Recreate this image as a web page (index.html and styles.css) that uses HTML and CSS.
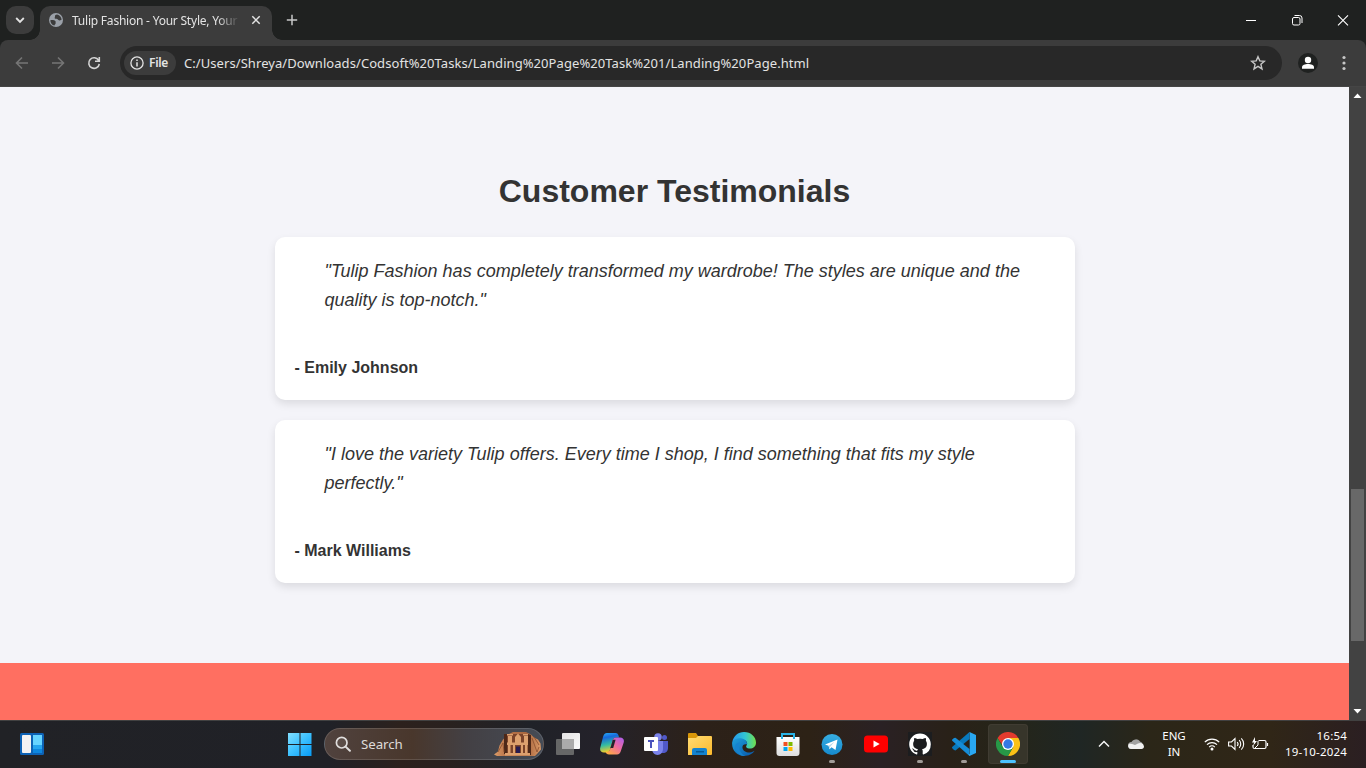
FILE: index.html
```html
<!DOCTYPE html>
<html lang="en">
<head>
<meta charset="utf-8">
<title>Tulip Fashion - Your Style, Your Way</title>
<link rel="stylesheet" href="styles.css">
</head>
<body>
<div class="screen">
  <header class="tabstrip">
    <button class="tab-search"><svg width="28" height="28" viewBox="0 0 28 28"><path d="M10.200 12l3.800 3.900 3.800-3.900" fill="none" stroke="#e3e3e3" stroke-width="1.800"/></svg></button>
    <div class="tab">
      <svg class="tab-icon" width="14" height="14" viewBox="0 0 14 14"><circle cx="7" cy="7" r="7" fill="#9aa0a8"/><path d="M1.300 7.200c2.100-.3 4-.2 5 .8.9 1 .1 1.400.3 2.400.2.800-1 .7-1.100 2.100C3 12 1.300 9.800 1.300 7.200zM8.200 1.400C6.300 1.600 5.700 2.500 6 3.500c.2.900-.8 1.300-.1 2 .8.800 2.300 0 3 1.100.5 1 1.900 1 3.700.2C12.500 4 10.800 2.200 8.200 1.400z" fill="#3c3c3c"/></svg>
      <span class="tab-title">Tulip Fashion - Your Style, Your W</span>
      <svg class="tab-close" width="10" height="10" viewBox="0 0 10 10"><path d="M1.300 1.300l7.400 7.400M8.700 1.300L1.300 8.700" stroke="#e3e3e3" stroke-width="1.500"/></svg>
    </div>
    <svg class="new-tab" width="12" height="12" viewBox="0 0 12 12"><path d="M6 .8v10.400M.8 6h10.400" stroke="#c7c7c7" stroke-width="1.500"/></svg>
    <div class="window-buttons">
      <svg width="46" height="40" viewBox="0 0 46 40"><path d="M18 20.500h10" stroke="#fff"/></svg>
      <svg width="46" height="40" viewBox="0 0 46 40"><g fill="none" stroke="#fff"><rect x="18.500" y="17.500" width="7.500" height="7.500" rx="1.500"/><path d="M20.500 15.500h5a2.500 2.500 0 0 1 2.500 2.500v5"/></g></svg>
      <svg width="46" height="40" viewBox="0 0 46 40"><path d="M18 15.300l10 10M28 15.300l-10 10" stroke="#fff" stroke-width="1.100"/></svg>
    </div>
  </header>

  <nav class="toolbar">
    <svg class="nav" width="16" height="16" viewBox="0 0 16 16"><path d="M14 8H2.700M8 2.500L2.500 8 8 13.500" class="line dim"/></svg>
    <svg class="nav" width="16" height="16" viewBox="0 0 16 16"><path d="M2 8h11.300M8 2.500L13.500 8 8 13.500" class="line dim"/></svg>
    <svg class="nav" width="16" height="16" viewBox="0 0 16 16"><path d="M12.600 5.300A5.300 5.300 0 1 0 13.300 9M13.300 2v4.300H9" class="line"/></svg>
    <div class="omnibox">
      <div class="chip">
        <svg width="14" height="14" viewBox="0 0 14 14"><circle cx="7" cy="7" r="6.100" fill="none" stroke="#e3e3e3" stroke-width="1.300"/><path d="M7 6.200v4.200M7 3.500v1.500" stroke="#e3e3e3" stroke-width="1.500"/></svg>
        <span>File</span>
      </div>
      <span class="url">C:/Users/Shreya/Downloads/Codsoft%20Tasks/Landing%20Page%20Task%201/Landing%20Page.html</span>
      <svg class="star" width="16" height="16" viewBox="0 0 16 16"><path d="M8 1.700l1.800 4.200 4.600.4-3.500 3 1.100 4.600L8 11.400l-4 2.500 1.100-4.600-3.500-3 4.600-.4z" fill="none" stroke="#c7c7c7" stroke-width="1.400"/></svg>
    </div>
    <svg class="profile" width="20" height="20" viewBox="0 0 20 20"><circle cx="10" cy="10" r="10" fill="#1f2120"/><circle cx="10" cy="7" r="3.200" fill="#fff"/><path d="M4 15.800v-1.600c0-2 3-3.200 6-3.200s6 1.200 6 3.200v1.600z" fill="#fff"/></svg>
    <svg class="menu" width="4" height="16" viewBox="0 0 4 16"><g fill="#c7c7c7"><circle cx="2" cy="2.500" r="1.600"/><circle cx="2" cy="8" r="1.600"/><circle cx="2" cy="13.500" r="1.600"/></g></svg>
  </nav>

  <div class="viewport">
    <main class="page">
      <section class="testimonials">
        <h2>Customer Testimonials</h2>
        <article class="card">
          <blockquote>"Tulip Fashion has completely transformed my wardrobe! The styles are unique and the<br>quality is top-notch."</blockquote>
          <p class="author">- Emily Johnson</p>
        </article>
        <article class="card">
          <blockquote>"I love the variety Tulip offers. Every time I shop, I find something that fits my style<br>perfectly."</blockquote>
          <p class="author">- Mark Williams</p>
        </article>
      </section>
      <section class="banner"></section>
    </main>
    <div class="scrollbar">
      <svg width="17" height="17" viewBox="0 0 17 17"><path d="M4.500 11L8.500 6.500 12.500 11z" fill="#fff"/></svg>
      <div class="thumb"></div>
      <svg width="17" height="17" viewBox="0 0 17 17"><path d="M4.500 6L8.500 10.500 12.500 6z" fill="#fff"/></svg>
    </div>
  </div>

  <footer class="taskbar">
    <svg class="widgets" width="24" height="22" viewBox="0 0 24 22"><rect width="24" height="22" rx="1.500" fill="#0d62b5"/><rect x="2" y="2" width="9" height="18" rx="1" fill="#f3f3f3"/><path d="M13 2h9v10h-9z" fill="#66d4ff"/><path d="M13 12h9v4h-9z" fill="#24a5ef"/><path d="M13 16h9v4h-9z" fill="#0d87df"/></svg>
    <div class="apps">
      <div class="app start"><svg width="24" height="24" viewBox="0 0 24 24"><defs><linearGradient id="win" x1="0" y1="0" x2="1" y2="1"><stop stop-color="#82dfff"/><stop offset=".5" stop-color="#3bc0ff"/><stop offset="1" stop-color="#079bf5"/></linearGradient></defs><path d="M0 1h11.500v11H0zM12.500 1H23.500v11H12.500zM0 13h11.500v11H0zM12.500 13H23.500v11H12.500z" fill="url(#win)"/></svg></div>
      <div class="search">
        <svg width="16" height="16" viewBox="0 0 16 16"><circle cx="6.700" cy="6.700" r="5.300" fill="#ffffff12" stroke="#e0dedd" stroke-width="1.700"/><path d="M10.600 10.600l4.300 4.200" stroke="#e0dedd" stroke-width="2" stroke-linecap="round"/></svg>
        <span>Search</span>
        <svg class="petra" width="48" height="26" viewBox="0 0 48 26"><defs><linearGradient id="rock"><stop stop-color="#dd9c67"/><stop offset=".25" stop-color="#b9744a"/><stop offset=".7" stop-color="#a9663e"/><stop offset="1" stop-color="#d99866"/></linearGradient></defs><path d="M0 23.500l4-3 1.500-6 3.500-6 5-5 5-2.500h13l5 2.500 3 3 4 2 2.500 4 .5 6-4 4.500-2 2H3z" fill="url(#rock)"/><path d="M10 3h3v20h-3zM34 3l3 1v20h-3z" fill="#4e2818"/><path d="M13 3h21v21H13z" fill="#7b432a"/><path d="M13 11.500h21V14H13zM11 22h25v2.500H11zM14 14h2.500v9H14zM19 14h2v9h-2zM27 14h2v9h-2zM31 14h2.500v9H31zM14 5h4v7h-4zM30 5h4v7h-4zM21 6l3-3.500L27 6v6h-6zM13 3h6v1.500h-6zM29 3h5v1.500h-5z" fill="#dda06e"/><path d="M22 15.500h4V22h-4z" fill="#271b50"/><path d="M38 7l5 14 2-5M40 6l5 8M4 21l5-9 1 9" fill="none" stroke="#8a4e2d" stroke-width=".8"/></svg>
      </div>
      <div class="app"><svg width="24" height="24" viewBox="0 0 24 24"><defs><linearGradient id="tvw" x2="1" y2="1"><stop stop-color="#e4e4e4"/><stop offset="1" stop-color="#fafafa"/></linearGradient></defs><rect x="6" y="1" width="18" height="16" rx="1" fill="url(#tvw)"/><rect y="7" width="18" height="16" rx="1" fill="#666767"/><path d="M6 7h12v10H6z" fill="#ababab"/></svg></div>
      <div class="app"><svg width="24" height="24" viewBox="0 0 24 24"><defs><linearGradient id="cp1" x2=".2" y2="1"><stop stop-color="#27b3fa"/><stop offset=".28" stop-color="#1768dc"/><stop offset=".65" stop-color="#36bda0"/><stop offset="1" stop-color="#efce2b"/></linearGradient><linearGradient id="cp2" x1="1" x2=".2" y2="1"><stop stop-color="#a85cf0"/><stop offset=".5" stop-color="#ee6aa1"/><stop offset="1" stop-color="#ffab43"/></linearGradient></defs><path d="M7 1h8.500c1.800 0 2.700 1 3.200 3L19 5.500h-3c-2 0-2.800 1-3.300 3L10.500 16c-.8 3-1.500 4.500-4 4.500H4C1 20.500-.5 18.500.3 15.500L3 5c.7-2.500 2-4 4-4z" fill="url(#cp1)"/><path d="M17 22.500H9c-2 0-2.900-1-3.400-2.500 3.200 0 4.200-1 4.900-4l2.200-7.500c.5-2 1.300-3 3.300-3h4c3 0 4.500 2 3.700 5L21 18.500c-.7 2.500-2 4-4 4z" fill="url(#cp2)"/><path d="M12.900 7.800h2.700L13.200 16h-2.800z" fill="#26222a"/></svg></div>
      <div class="app"><svg width="24" height="24" viewBox="0 0 24 24"><circle cx="14" cy="5" r="3.800" fill="#7b83eb"/><circle cx="20.500" cy="5.500" r="2.500" fill="#5059c9"/><path d="M17 9h7v7c0 3-2 5-5 5h-2z" fill="#5059c9"/><path d="M8 9h11v8c0 3-2.500 6-5.500 6S8 20 8 17z" fill="#7b83eb"/><rect y="5" width="14" height="14" rx="1" fill="#fff"/><path d="M4 8h6v2H8v6H6v-6H4z" fill="#4b53bc"/></svg></div>
      <div class="app"><svg width="24" height="24" viewBox="0 0 24 24"><defs><linearGradient id="fold" x2="1" y2="1"><stop stop-color="#ffdc74"/><stop offset="1" stop-color="#fcb92c"/></linearGradient></defs><path d="M0 2q0-1 1-1h7l2 3v3H0z" fill="#d99709"/><path d="M0 6h8l2-2h13q1 0 1 1v17q0 1-1 1H0z" fill="url(#fold)"/><path d="M4 23v-5q0-2 2-2h11q2 0 2 2v5z" fill="#1483cf"/><path d="M8 19h8v1.500H8z" fill="#075994"/></svg></div>
      <div class="app"><svg width="24" height="24" viewBox="0 0 24 24"><defs><linearGradient id="ed1" x2="1"><stop stop-color="#2598ef"/><stop offset=".55" stop-color="#32c6d1"/><stop offset="1" stop-color="#71e14c"/></linearGradient><linearGradient id="ed2" x2="1" y2="1"><stop stop-color="#1fa0db"/><stop offset="1" stop-color="#0756aa"/></linearGradient></defs><path d="M.3 10C1.500 4 6 0 12 0c7 0 12 5 12 10.500 0 4-3 6-6 6-3.500 0-4.500-1.500-3.500-3 1.500-2 .5-5-3-5.500C7 7.200 2 8 .3 10z" fill="url(#ed1)"/><path d="M.2 10C2 7 6 5.500 10 6.500c3.500.8 5.500 3.500 5 6-3-1-5 1-4.500 3.500.5 3 4 5 7.500 4.500 2-.2 3.500-1 4.500-1.700C20.500 22 16.500 24 12 24 5 24-.8 18 .2 10z" fill="url(#ed2)"/><path d="M8 10.500C5.500 14.500 7.500 21 13 23.900 8 24.300 3 20 3 15c0-3 2-4.500 5-4.500z" fill="#1683ce"/></svg></div>
      <div class="app"><svg width="24" height="24" viewBox="0 0 24 24"><defs><linearGradient id="bag" y2="1" x2="0"><stop stop-color="#fff"/><stop offset="1" stop-color="#dedede"/></linearGradient></defs><path d="M6 6V2h12v4" fill="none" stroke="#29b4e8" stroke-width="2"/><path d="M.5 5h23v16q0 3-3 3h-17q-3 0-3-3z" fill="url(#bag)"/><path d="M6 7V3M18 7V3" stroke="#29b4e8" stroke-width="2"/><path d="M7.500 10h4v4h-4z" fill="#f25022"/><path d="M12.500 10h4v4h-4z" fill="#7fba00"/><path d="M7.500 15h4v4h-4z" fill="#00a4ef"/><path d="M12.500 15h4v4h-4z" fill="#ffb900"/></svg></div>
      <div class="app running"><svg width="24" height="24" viewBox="0 0 24 24"><defs><linearGradient id="tg" x2="0" y2="1"><stop stop-color="#37aee2"/><stop offset="1" stop-color="#168acd"/></linearGradient></defs><circle cx="12" cy="12.500" r="10.500" fill="url(#tg)"/><path d="M5 12.500L17.500 7.500 15.500 18 11.500 15.300 9.500 17.200 8.600 13.700z" fill="#fff"/><path d="M8.600 13.700L14.500 9.800 10.200 14.700 9.500 17.200z" fill="#b8d9eb"/></svg></div>
      <div class="app"><svg width="24" height="24" viewBox="0 0 24 24"><rect y="3.500" width="24" height="17" rx="3.500" fill="#f00"/><path d="M9.500 8.500l6.200 3.500-6.200 3.500z" fill="#fff"/></svg></div>
      <div class="app running"><svg width="24" height="24" viewBox="0 0 24 24"><path d="M0 0h24v24H0z" fill="#1c1d1f"/><path transform="translate(1.200 1.500) scale(1.350)" d="M8 0C3.580 0 0 3.580 0 8c0 3.540 2.290 6.530 5.470 7.590.4.070.55-.17.55-.38 0-.19-.01-.82-.01-1.490-2.010.37-2.530-.49-2.690-.94-.09-.23-.48-.94-.82-1.130-.28-.15-.68-.52-.01-.53.63-.01 1.080.58 1.230.82.72 1.210 1.870.87 2.330.66.070-.52.280-.87.510-1.070-1.780-.2-3.640-.89-3.640-3.950 0-.87.310-1.590.82-2.150-.08-.2-.36-1.020.08-2.120 0 0 .67-.21 2.200.82a7.600 7.600 0 0 1 4 0c1.530-1.040 2.200-.82 2.200-.82.44 1.100.16 1.920.08 2.120.51.56.82 1.270.82 2.150 0 3.070-1.870 3.750-3.650 3.950.29.25.54.73.54 1.480 0 1.070-.01 1.930-.01 2.200 0 .21.15.46.55.38A8.010 8.010 0 0 0 16 8c0-4.420-3.580-8-8-8z" fill="#fff"/></svg></div>
      <div class="app running"><svg width="24" height="24" viewBox="0 0 24 24"><path d="M17.500 0v7L3.500 18.500 2 18l-2-2 .1-1z" fill="#0879bd"/><path d="M0 7.800L2 6l1.500-.3L17.500 17v7L.2 8.800z" fill="#168dd7"/><path d="M17.500 0L24 3v18l-6.500 3-1-1.500 1.200-.5V2z" fill="#29a8f2"/></svg></div>
      <div class="app active"><svg width="24" height="24" viewBox="0 0 24 24"><path d="M12 12V6h10.400A12 12 0 0 1 12 24l5.200-9z" fill="#fbc116"/><path d="M12 12l5.200 3L12 24A12 12 0 0 1 1.600 6l5.200 9z" fill="#279847"/><path d="M1.600 6A12 12 0 0 1 22.400 6H12L7 14z" fill="#e33b2e"/><circle cx="12" cy="12" r="6" fill="#fff"/><circle cx="12" cy="12" r="4.700" fill="#3478e5"/></svg></div>
    </div>
    <div class="tray">
      <svg class="caret" width="12" height="8" viewBox="0 0 12 8"><path d="M1 6.500l5-5 5 5" fill="none" stroke="#f5f5f5" stroke-width="1.500"/></svg>
      <svg class="cloud" width="16" height="12" viewBox="0 0 16 12"><path d="M3.500 11A3.500 3.500 0 0 1 3.500 4 5 5 0 0 1 12 3.500 4 4 0 0 1 12.500 11z" fill="#a2a2a2"/><path d="M3 11a3 3 0 0 1-1.800-5.200C4 5.200 5.500 6.500 7 7l3-1.500a4 4 0 0 1 6 3c0 1.500-1 2.500-2.500 2.500z" fill="#f1f1f1"/></svg>
      <div class="lang">ENG<br>IN</div>
      <svg class="wifi" width="16" height="14" viewBox="0 0 16 14"><g fill="none" stroke="#fff" stroke-width="1.200"><path d="M.8 5.200a10 10 0 0 1 14.400 0M3 7.700a7 7 0 0 1 10 0M5.200 10.100a4 4 0 0 1 5.600 0"/></g><circle cx="8" cy="12" r="1.500" fill="#fff"/></svg>
      <svg class="volume" width="17" height="14" viewBox="0 0 17 14"><g fill="none" stroke="#fff" stroke-width="1.100"><path d="M.6 5v4h2.900l3.500 3.400V1.600L3.500 5zM9.200 5a3 3 0 0 1 0 4M11.200 3.200a5.500 5.500 0 0 1 0 7.600M13.300 1.300a8 8 0 0 1 0 11.400"/></g></svg>
      <svg class="battery" width="17" height="14" viewBox="0 0 17 14"><g fill="none" stroke="#fff" stroke-width="1.200"><path d="M6.500 3.500h6q1.500 0 1.500 1.500v5q0 1.500-1.500 1.500h-10Q1 11.500 1 10V8"/><path d="M15.500 6v3"/></g><path d="M3 0L0 5.500h2.200L1 9l4-5H3z" fill="#fff"/><path d="M6 4v4L3 11" stroke="#fff" fill="none"/></svg>
      <div class="clock">16:54<br>19-10-2024</div>
    </div>
  </footer>
</div>
</body>
</html>
```
FILE: styles.css
```css
* { box-sizing: border-box; }
body { margin: 0; overflow: hidden; }
svg { display: block; flex: none; }

.screen {
  width: 1366px;
  height: 768px;
  display: flex;
  flex-direction: column;
  overflow: hidden;
  background: #1f2120;
  font-family: "Noto Sans", "Open Sans", sans-serif;
}

/* Browser tabs */
.tabstrip {
  height: 40px;
  flex: none;
  display: flex;
  align-items: center;
  padding-left: 6px;
  background: #1f2120;
}
.tab-search {
  width: 28px;
  height: 28px;
  padding: 0;
  border: 0;
  border-radius: 10px;
  background: #3c3c3c;
}
.tab {
  position: relative;
  width: 232px;
  height: 34px;
  align-self: flex-end;
  margin-left: 6px;
  padding: 0 10px 6px 9px;
  display: flex;
  align-items: center;
  background: #3c3c3c;
  border-radius: 10px 10px 0 0;
}
.tab::before,
.tab::after {
  content: "";
  position: absolute;
  bottom: 0;
  width: 10px;
  height: 10px;
}
.tab::before { left: -10px; background: radial-gradient(circle at 0 0, transparent 9.5px, #3c3c3c 10px); }
.tab::after { right: -10px; background: radial-gradient(circle at 100% 0, transparent 9.5px, #3c3c3c 10px); }
.tab-title {
  width: 172px;
  margin-left: 9px;
  padding-top: 1px;
  white-space: nowrap;
  color: #e3e3e3;
  font-size: 12px;
  line-height: 18px;
  letter-spacing: -0.22px;
  -webkit-mask-image: linear-gradient(90deg, #000 145px, transparent 168px);
  mask-image: linear-gradient(90deg, #000 145px, transparent 168px);
}
.tab-close { margin-left: auto; margin-right: 1px; }
.new-tab { margin-left: 14px; }
.window-buttons { display: flex; margin-left: auto; }

/* Address bar */
.toolbar {
  height: 47px;
  flex: none;
  display: flex;
  align-items: center;
  padding: 0 20px 1px 14px;
  background: #3c3c3c;
  border-radius: 8px 8px 0 0;
  border-bottom: 1px solid #454545;
}
.nav { margin-right: 20px; }
.line { fill: none; stroke: #d4d4d4; stroke-width: 1.6; }
.dim { stroke: #757575; }
.omnibox {
  width: 1162px;
  height: 34px;
  margin-left: -2px;
  padding: 0 16px 0 4px;
  display: flex;
  align-items: center;
  border-radius: 17px;
  background: #282828;
}
.chip {
  width: 52px;
  height: 24px;
  padding-left: 6px;
  display: flex;
  align-items: center;
  gap: 5px;
  border-radius: 12px;
  background: #3c3c3c;
  color: #e3e3e3;
  font-size: 12px;
  font-weight: 600;
  letter-spacing: -0.3px;
}
.url {
  margin-left: 8px;
  color: #e3e3e3;
  font-size: 13px;
  letter-spacing: 0.07px;
  white-space: nowrap;
}
.star { margin-left: auto; }
.profile { margin-left: 16px; }
.menu { margin-left: 24px; }

/* Web page */
.viewport { height: 633px; flex: none; display: flex; }
.page {
  width: 1349px;
  height: 633px;
  overflow: hidden;
  color: #333;
  font-family: "Liberation Sans", Arial, sans-serif;
  line-height: 1.6;
}
.testimonials {
  height: 576px;
  padding-top: 79px;
  background: #f4f4f9;
}
.testimonials h2 {
  margin: 0;
  height: 71px;
  text-align: center;
  font-size: 32px;
}
.card {
  width: 800px;
  height: 163px;
  margin: 0 auto 20px;
  padding: 20px 20px 19px;
  border-radius: 10px;
  background: #fff;
  box-shadow: 0 4px 8px rgba(0, 0, 0, 0.1);
}
.card blockquote {
  margin: 0 0 40px 30px;
  font-size: 18px;
  line-height: 29px;
  font-style: italic;
  white-space: nowrap;
}
.author { margin: 0; font-size: 16px; line-height: 26px; font-weight: bold; }
.banner { height: 57px; background: #ff6f61; }
.scrollbar {
  width: 17px;
  display: flex;
  flex-direction: column;
  background: #424242;
}
.thumb { width: 13px; height: 152px; margin: 385px 0 auto 2px; background: #686868; }

/* Taskbar */
.taskbar {
  height: 48px;
  flex: none;
  display: flex;
  align-items: center;
  padding: 0 19px 1px 20px;
  border-top: 1px solid #414141;
  background: linear-gradient(90deg, #212226 0, #202127 330px, #2c211d 400px, #29211f 450px, #202228 530px, #24222a 600px, #2c2119 700px, #2d2216 810px, #2a2124 880px, #292118 950px, #252519 1010px, #1f2624 1080px, #2b2618 1150px, #302617 1270px, #2b1f22 1366px);
  color: #fff;
}
.apps { display: flex; align-items: center; gap: 4px; margin-left: 236px; }
.app {
  position: relative;
  width: 40px;
  height: 40px;
  display: flex;
  align-items: center;
  justify-content: center;
}
.start { padding-right: 1px; }
.search {
  width: 220px;
  height: 32px;
  padding: 0 1px 0 10px;
  display: flex;
  align-items: center;
  border: 1px solid #ffffff22;
  border-radius: 16px;
  background: linear-gradient(90deg, #50423e, #49372c 40%, #434044 65%, #454b55);
  color: #dedbd9;
  font-size: 13.3px;
}
.search span { margin-left: 10px; letter-spacing: -0.05px; }
.petra { margin-left: auto; }
.running::after,
.active::after {
  content: "";
  position: absolute;
  left: 17px;
  bottom: 1px;
  width: 6px;
  height: 3px;
  border-radius: 2px;
  background: #a19c98;
}
.active {
  border-radius: 4px;
  background: #37352a;
  box-shadow: inset 0 0 0 1px #403c32;
}
.active::after { left: 12px; width: 16px; background: #4cc2ff; }
.tray {
  display: flex;
  align-items: center;
  margin-left: auto;
  font-size: 11.5px;
  line-height: 16px;
}
.cloud { margin-left: 18px; }
.lang { width: 26px; margin-left: 17px; text-align: center; }
.wifi { margin-left: 17px; }
.volume { margin-left: 8px; }
.battery { margin-left: 7px; }
.clock { width: 63px; margin-left: 15px; text-align: right; white-space: nowrap; letter-spacing: 0.2px; }
```
